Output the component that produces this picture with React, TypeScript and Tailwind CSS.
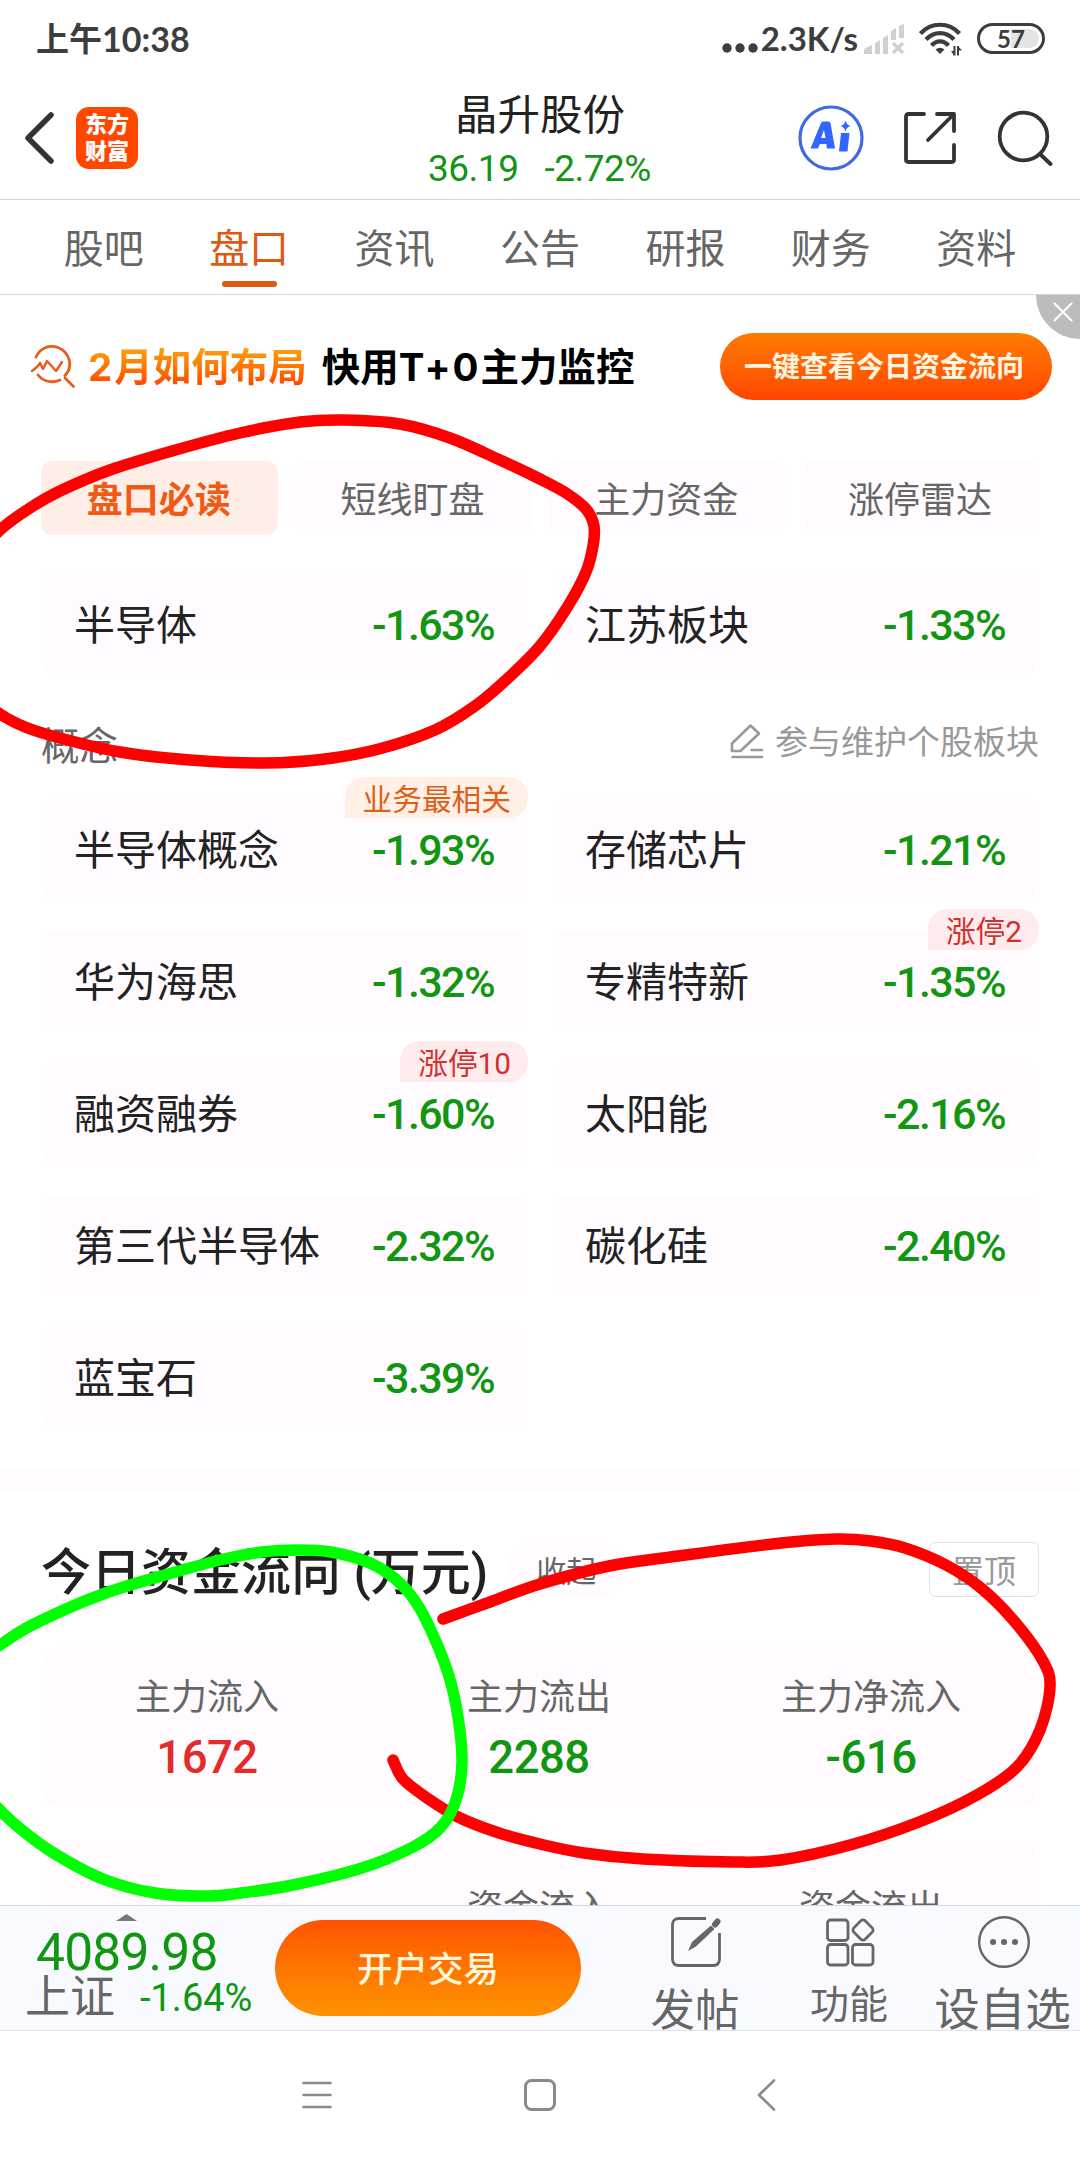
import { ReactNode } from "react";

type Stock = { name: string; change: string; tag?: string; hot?: boolean };

const tabs = ["股吧", "盘口", "资讯", "公告", "研报", "财务", "资料"];
const chips = ["盘口必读", "短线盯盘", "主力资金", "涨停雷达"];

const boards: Stock[] = [
  { name: "半导体", change: "-1.63%" },
  { name: "江苏板块", change: "-1.33%" },
];

const concepts: Stock[] = [
  { name: "半导体概念", change: "-1.93%", tag: "业务最相关" },
  { name: "存储芯片", change: "-1.21%" },
  { name: "华为海思", change: "-1.32%" },
  { name: "专精特新", change: "-1.35%", tag: "涨停2", hot: true },
  { name: "融资融券", change: "-1.60%", tag: "涨停10", hot: true },
  { name: "太阳能", change: "-2.16%" },
  { name: "第三代半导体", change: "-2.32%" },
  { name: "碳化硅", change: "-2.40%" },
  { name: "蓝宝石", change: "-3.39%" },
];

const flows = [
  { label: "主力流入", value: "1672", up: true },
  { label: "主力流出", value: "2288", up: false },
  { label: "主力净流入", value: "-616", up: false },
];

// pen marks drawn over the page
const redOne = [
  [-30, 562], [0, 530], [30, 508], [60, 491], [110, 470], [172, 451], [240, 433], [300, 422], [345, 420], [400, 424], [450, 438],
  [500, 460], [540, 479], [566, 493], [586, 509], [594, 526], [593, 546], [586, 572], [568, 606], [540, 646],
  [506, 680], [475, 706], [435, 730], [379, 749], [325, 759], [265, 763], [190, 760], [120, 752], [60, 738],
  [25, 727], [0, 714], [-30, 690],
];
const redTwo = [
  [443, 1619], [490, 1602], [540, 1584], [609, 1566], [678, 1556], [781, 1543], [836, 1539], [871, 1541],
  [905, 1548], [946, 1565], [981, 1588], [1015, 1622], [1043, 1661], [1050, 1687], [1040, 1730], [1017, 1767],
  [977, 1795], [919, 1822], [850, 1845], [781, 1860], [733, 1862], [643, 1859], [584, 1853], [540, 1844],
  [499, 1833], [458, 1817], [427, 1798], [403, 1779], [393, 1760],
];
const green = [
  [-30, 1664], [0, 1645], [34, 1624], [103, 1594], [172, 1573], [220, 1560], [262, 1552], [300, 1550], [331, 1552],
  [365, 1561], [389, 1574], [410, 1594], [427, 1622], [448, 1673], [458, 1717], [462, 1763], [456, 1800],
  [441, 1827], [413, 1847], [362, 1868], [293, 1885], [241, 1893], [207, 1896], [155, 1893], [103, 1879],
  [52, 1852], [17, 1826], [0, 1810], [-30, 1780],
];

function smooth(p: number[][]) {
  let d = `M${p[0][0]} ${p[0][1]}`;
  for (let i = 0; i < p.length - 1; i++) {
    const a = p[i - 1] || p[i];
    const b = p[i];
    const c = p[i + 1];
    const e = p[i + 2] || c;
    d += `C${b[0] + (c[0] - a[0]) / 6} ${b[1] + (c[1] - a[1]) / 6} ${c[0] - (e[0] - b[0]) / 6} ${c[1] - (e[1] - b[1]) / 6} ${c[0]} ${c[1]}`;
  }
  return d;
}

function StatusBar() {
  return (
    <div className="flex h-[77px] items-center justify-between pr-[35px] pl-9 font-['Lato','Noto_Sans_CJK_SC',sans-serif] font-bold text-[#3d3d3d]">
      <div className="flex items-center text-[34px] leading-none">
        <span className="text-[33px] font-bold">上午</span>
        <span>10:38</span>
      </div>
      <div className="flex items-center">
        <svg width="36" height="30" viewBox="0 0 36 30" fill="#3d3d3d">
          <circle cx="5" cy="24" r="4.7" />
          <circle cx="18" cy="24" r="4.7" />
          <circle cx="31" cy="24" r="4.7" />
        </svg>
        <span className="ml-[3px] text-[33px] leading-none">2.3K/s</span>
        <svg className="ml-1.5" width="41" height="30" viewBox="0 0 41 30" fill="#d0d0d0">
          <path d="M0 25l8-4v9H0zM11 19l5-3v14h-5zM19 14l5-3v19h-5zM27 7l5-3v12h-5zM35 2l5-2v14h-5z" />
          <path d="M29 19l10 10M39 19L29 29" stroke="#d0d0d0" strokeWidth="3.5" />
        </svg>
        <svg className="ml-[14px]" width="43" height="34" viewBox="0 0 43 34" fill="none" stroke="#3d3d3d" strokeWidth="4.2">
          <path d="M1.5 11.5C12 -.2 30 -.2 40.5 11.5M7 17.5c8-8.500 20-8.500 28 0M12.5 23.5c5-5.500 12-5.500 17 0" />
          <path d="M16.5 27.5q4.500-3.500 9 0L21 32z" fill="#3d3d3d" stroke="none" />
          <path d="M35.5 24v9.5M39 24v9.5" strokeWidth="2" />
          <path d="M32 29h3v4.500zM39 24l4 4.500h-4z" fill="#3d3d3d" stroke="none" />
        </svg>
        <div className="ml-[15px] flex h-[31px] w-[68px] rounded-full border-[3px] border-[#3d3d3d] p-[3px]">
          <div className="flex w-full items-center justify-center rounded-full bg-linear-to-r from-white from-50% to-[#e4e4e4] to-50% text-[24px] leading-none">
            57
          </div>
        </div>
      </div>
    </div>
  );
}

function Header() {
  return (
    <div className="flex h-[123px] items-center border-b border-[#d6d6d8] pl-6 pr-[27px]">
      <div className="flex w-[404px] items-center">
        <svg width="32" height="54" viewBox="0 0 32 54" fill="none" stroke="#333" strokeWidth="5.5" strokeLinecap="round" strokeLinejoin="round">
          <path d="M27 4L4 27l23 23" />
        </svg>
        <div className="ml-5 flex h-[62px] w-[62px] flex-col items-center justify-center rounded-[13px] bg-[#ff4700] text-[22px] leading-[27px] font-black text-white">
          <span>东方</span>
          <span>财富</span>
        </div>
      </div>
      <div className="flex grow flex-col pt-[6px]">
        <div className="pl-[27px] text-[42.5px] leading-[56px] text-[#222]">晶升股份</div>
        <div className="flex gap-[26px] text-[37px] leading-[50px] tracking-[-0.5px] text-[#149414]">
          <span>36.19</span>
          <span>-2.72%</span>
        </div>
      </div>
      <div className="flex items-center">
        <svg width="66" height="66" viewBox="0 0 66 66">
          <circle cx="33" cy="33" r="31" fill="none" stroke="#4169e1" strokeWidth="3.2" />
          <path d="M23 18q.5-1.500 2-1.500h5.500q1.500 0 2 1.500l4.500 25.500h-8l-.6-4.500h-6.500l-2 4.500H12.500zM26 25l-3 8h4.500z" fill="#3366ff" />
          <path d="M43 28h8.500L49.500 46.500H41z" fill="#3366ff" />
          <path d="M47.500 15.500q1.200 4.500 5 5.500-4.200 1-5 5.500-1-4.500-5-5.500 4-1 5-5.500z" fill="#3366ff" />
        </svg>
        <svg className="ml-[39px]" width="54" height="54" viewBox="0 0 54 54" fill="none" stroke="#333" strokeWidth="3.8" strokeLinecap="round" strokeLinejoin="round">
          <path d="M21 3H5.500Q3 3 3 5.500v43Q3 51 5.500 51h43q2.500 0 2.500-2.500V34" />
          <path d="M34 3h17v17M51 3L25 29" />
        </svg>
        <svg className="ml-10" width="56" height="56" viewBox="0 0 56 56" fill="none" stroke="#333" strokeWidth="3.8" strokeLinecap="round">
          <circle cx="26.5" cy="26.5" r="23.8" />
          <path d="M43 44l10.500 10" />
        </svg>
      </div>
    </div>
  );
}

function Banner() {
  return (
    <div className="relative flex h-[142px] items-center overflow-hidden pl-[30px] pr-7 font-bold">
      <svg width="45" height="44" viewBox="0 0 45 44" fill="none" stroke="#e85d1c" strokeWidth="2.8" strokeLinecap="round" strokeLinejoin="round">
        <path d="M6 13C10 4 19 .5 28 3.500c12 5 15.500 19 7 28M8 31c5 6.500 14 8.500 22 5M35 34l8.500 8.500" />
        <path d="M2 27l5-4 3-4 3 6 4-8 9 10 6-9" strokeWidth="2.5" />
      </svg>
      <div className="ml-[13px] bg-linear-to-b from-[#ff9a0a] from-20% to-[#ff4d00] to-80% bg-clip-text pt-0.5 text-[38.5px] leading-[50px] text-transparent">
        <span className="font-['Inter',sans-serif] tracking-[2px]">2</span>月如何布局
      </div>
      <div className="ml-[15px] pt-0.5 text-[38.5px] leading-[50px] text-black">
        快用<span className="font-['Inter',sans-serif] tracking-[2px]">T+0</span>主力监控
      </div>
      <div className="ml-auto flex h-[67px] w-[332px] items-center justify-center rounded-full bg-linear-to-b from-[#ff7b00] to-[#ff4400] pt-[3px] pr-1 text-[28px] leading-none text-[#fff3e2]">
        一键查看今日资金流向
      </div>
      <svg className="absolute top-0 right-0" width="44" height="45" viewBox="0 0 44 45">
        <circle cx="44" cy="0" r="44" fill="#bcbcbc" />
        <path d="M18.5 8.500l17 17M35.5 8.500l-17 17" stroke="#fff" strokeWidth="2" strokeLinecap="round" />
      </svg>
    </div>
  );
}

function StockCard({ name, change, tag, hot }: Stock) {
  return (
    <div className="relative flex h-[99px] items-center justify-between rounded-xl bg-[#fffbff] pt-1 pl-[33px] pr-[34px]">
      <span className="pt-0.5 text-[41px] leading-none text-[#222]">{name}</span>
      <span className="text-[43px] leading-none font-medium tracking-[-1.6px] text-[#109610]">{change}</span>
      {tag && (
        <div
          className={
            "absolute -top-[22px] right-0 flex h-[41px] items-center rounded-[20px] rounded-bl-none pt-1 pr-[17px] pl-[18px] text-[29.7px] leading-none " +
            (hot ? "bg-[#ffeaec] text-[#d2302f]" : "bg-[#ffefe5] text-[#dd5f1a]")
          }
        >
          {tag}
        </div>
      )}
    </div>
  );
}

function FlowSection() {
  return (
    <div className="h-[413px] overflow-hidden px-[41px] pt-[50px]">
      <div className="flex h-[55px] items-center">
        <h2 className="pt-[6px] text-[50px] leading-none font-medium whitespace-pre text-[#222]">今日资金流向 (万元)</h2>
        <div className="ml-[21px] flex h-[55px] w-[114px] items-center justify-center rounded-full bg-[#fffbff] pt-1 text-[30px] leading-none text-[#666]">
          收起
        </div>
        <div className="ml-auto flex h-[55px] w-[110px] items-center justify-center rounded-md border border-[#e3e3e3] pt-1 text-[32px] leading-none text-[#999]">
          置顶
        </div>
      </div>
      <div className="mt-[50px] grid h-40 grid-cols-3 rounded-[20px] bg-[#fffbff] pt-[27px] pr-0.5 text-center">
        {flows.map((f) => (
          <div key={f.label}>
            <div className="text-[36px] leading-[48px] text-[#666]">{f.label}</div>
            <div className={"pt-[8px] text-[45.5px] leading-[56px] font-medium tracking-[-0.5px] " + (f.up ? "text-[#e42b2b]" : "text-[#109610]")}>
              {f.value}
            </div>
          </div>
        ))}
      </div>
      <div className="mt-[33px] grid h-40 grid-cols-3 rounded-[20px] bg-[#fffbff] pt-[45px] pr-0.5 text-center text-[36px] leading-[48px] text-[#666]">
        <div />
        <div>资金流入</div>
        <div>资金流出</div>
      </div>
    </div>
  );
}

function Action({ label, className, children }: { label: string; className: string; children: ReactNode }) {
  return (
    <div className="flex flex-col items-center pt-[10px]">
      <svg width="52" height="52" viewBox="0 0 52 52" fill="none" stroke="#666" strokeWidth="2.8">
        {children}
      </svg>
      <span className={"mr-0.5 whitespace-nowrap text-[#666] " + className}>{label}</span>
    </div>
  );
}

function BottomBar() {
  return (
    <div className="flex h-[126px] border-y border-t-[#cfd6e2] border-b-[#e2e3e8] bg-[#f8faff]">
      <div className="w-[275px] pl-[25px]">
        <svg className="mt-2 ml-[91px]" width="21" height="7" viewBox="0 0 21 7" fill="#777">
          <path d="M0 7L10.500 0 21 7z" />
        </svg>
        <div className="pt-[9px] pl-[11px] text-[51.5px] leading-[46px] tracking-[-0.8px] text-[#109610]">4089.98</div>
        <div className="flex items-center leading-[44px]">
          <span className="text-[45px] text-[#666]">上证</span>
          <span className="ml-[25px] text-[38px] text-[#109610]">-1.64%</span>
        </div>
      </div>
      <div className="mt-[14px] flex h-24 w-[306px] items-center justify-center rounded-[48px] bg-linear-to-b from-[#ff5200] to-[#ff9200] pt-1.5 text-[35.5px] leading-none font-medium text-[#fff6d8]">
        开户交易
      </div>
      <div className="ml-[38px] grid grid-cols-[154px_154px_153px]">
        <Action label="发帖" className="mt-[21px] text-[44.5px] leading-[44px]">
          <path d="M36 2.500H9Q2.500 2.500 2.500 9v34q0 6.500 6.500 6.500h34q6.500 0 6.500-6.500V17" />
          <path d="M18 35l4-9L41 9.500l3.500 3.500L26 30.500z" fill="#666" stroke="none" />
          <path d="M45 8.500l2.500-3" strokeWidth="6" strokeLinecap="round" />
        </Action>
        <Action label="功能" className="mt-[15px] text-[39px] leading-[44px]">
          <rect x="3.5" y="4" width="20.5" height="20.5" rx="3" />
          <rect x="3.5" y="28.5" width="20.5" height="20.5" rx="3" />
          <rect x="28.5" y="28.5" width="20.5" height="20.5" rx="3" />
          <rect x="31" y="6" width="16" height="16" rx="3" transform="rotate(45 39 14)" />
        </Action>
        <Action label="设自选" className="mt-[21px] text-[45.5px] leading-[44px]">
          <circle cx="26" cy="26" r="24.8" strokeWidth="2.4" />
          <path d="M15 26h.1M26 26h.1M37 26h.1" strokeWidth="6" strokeLinecap="round" />
        </Action>
      </div>
    </div>
  );
}

function SystemNav() {
  return (
    <div className="flex h-[129px] items-center gap-[192px] pb-0.5 pl-[302px]">
      <svg width="30" height="32" viewBox="0 0 30 32" stroke="#8a8a8a" strokeWidth="2.6" strokeLinecap="round">
        <path d="M1.5 4h27M1.5 16h27M1.5 28h27" />
      </svg>
      <svg width="32" height="32" viewBox="0 0 32 32" fill="none" stroke="#8a8a8a" strokeWidth="3">
        <rect x="1.5" y="1.5" width="29" height="29" rx="6" />
      </svg>
      <svg className="ml-2" width="30" height="32" viewBox="0 0 30 32" fill="none" stroke="#8a8a8a" strokeWidth="2.6" strokeLinecap="round" strokeLinejoin="round">
        <path d="M18 1.500L3 16l15 14.500" />
      </svg>
    </div>
  );
}

export default function App() {
  return (
    <div className="relative flex h-[2160px] w-[1080px] flex-col overflow-hidden bg-white font-['Roboto','Noto_Sans_CJK_SC',sans-serif]">
      <StatusBar />
      <Header />
      <div className="flex h-[95px] border-b border-[#d6d6d8] px-[31px]">
        {tabs.map((t, i) => (
          <div key={t} className={"flex flex-1 flex-col items-center pt-[22px] text-[40px] leading-[56px] " + (i === 1 ? "text-[#dc5a14]" : "text-[#666]")}>
            {t}
            {i === 1 && <div className="mt-[3px] h-1.5 w-[55px] rounded-full bg-[#dc5a14]" />}
          </div>
        ))}
      </div>
      <Banner />
      <div className="mt-6 grid grid-cols-4 gap-[17px] px-[41px]">
        {chips.map((c, i) => (
          <div
            key={c}
            className={
              "flex h-[74px] items-center justify-center rounded-xl pt-[5px] pr-px text-[36px] leading-none " +
              (i === 0 ? "bg-[#ffeee6] font-bold text-[#f05a14]" : "bg-[#fffbff] text-[#666]")
            }
          >
            {c}
          </div>
        ))}
      </div>
      <div className="mt-[39px] grid grid-cols-2 gap-6 px-[41px]">
        {boards.map((s) => (
          <StockCard key={s.name} {...s} />
        ))}
      </div>
      <div className="mt-[42px] flex h-[60px] items-center justify-between px-[41px]">
        <span className="pt-[5px] text-[38.5px] leading-none text-[#666]">概念</span>
        <div className="-mt-2 flex items-center gap-[11px] text-[33px] leading-none text-[#999]">
          <svg width="34" height="36" viewBox="0 0 34 36" fill="none" stroke="#999" strokeWidth="2.6" strokeLinecap="round" strokeLinejoin="round">
            <path d="M2 20.500L20.500 2.500l8.500 8-18.500 17.500H2zM21.500 27H32M2.500 34H32" />
          </svg>
          <span className="pt-[3px]">参与维护个股板块</span>
        </div>
      </div>
      <div className="mt-6 grid grid-cols-2 gap-x-6 gap-y-[33px] px-[41px]">
        {concepts.map((s) => (
          <StockCard key={s.name} {...s} />
        ))}
      </div>
      <div className="mt-[43px] h-[23px] bg-[#fffbff]" />
      <FlowSection />
      <BottomBar />
      <SystemNav />
      <svg className="pointer-events-none absolute inset-0" width="1080" height="2160" viewBox="0 0 1080 2160" fill="none" strokeWidth="11.5" strokeLinecap="round">
        <path d={smooth(redOne)} stroke="#f00" />
        <path d={smooth(redTwo)} stroke="#f00" />
        <path d={smooth(green)} stroke="#0f0" />
      </svg>
    </div>
  );
}
